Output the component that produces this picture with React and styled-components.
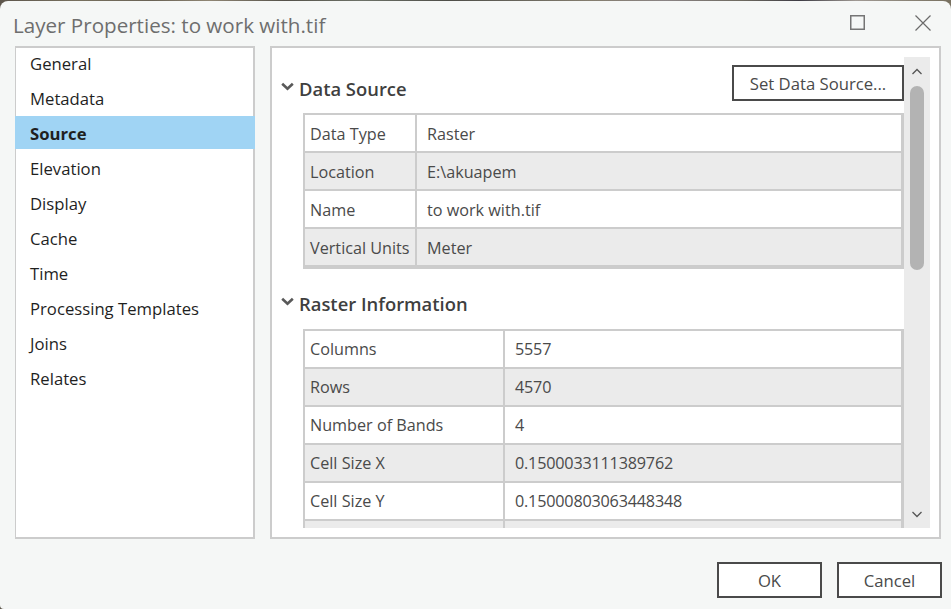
import React from "react";
import styled, { createGlobalStyle } from "styled-components";

const Global = createGlobalStyle`
  html, body { margin: 0; padding: 0; width: 951px; height: 609px; overflow: hidden; }
  body {
    font-family: "Open Sans", "Noto Sans", sans-serif;
    background: linear-gradient(90deg, #5d564c 0%, #77705f 8%, #6a6355 16%, #8f8674 22%, #55524a 30%, #6d7268 38%, #4e4e48 47%, #6d6a60 56%, #847d6e 62%, #8a8484 70%, #6e6a60 78%, #3d3c44 84%, #a09a94 90%, #77705f 100%);
  }
  * { box-sizing: border-box; }
`;

const Dialog = styled.div`
  margin-top: 1px;
  height: 608px;
  background: #f5f7f6;
  border-radius: 8px 8px 0 4px;
  display: flex;
  flex-direction: column;
`;

const TitleBar = styled.div`
  height: 45px;
  flex: none;
  display: flex;
  align-items: center;
  padding: 0 20px 2px 13px;
`;

const Title = styled.div`
  flex: 1;
  font-size: 20.6px;
  color: #6e6e6e;
  line-height: 30px;
  padding-top: 5px;
`;

const WindowControls = styled.div`
  display: flex;
  align-items: center;
  gap: 50px;
`;

const Body = styled.div`
  flex: none;
  height: 493px;
  display: flex;
  gap: 15px;
  padding: 0 10px 0 15px;
`;

const NavList = styled.div`
  width: 240px;
  flex: none;
  background: #fff;
  border: 2px solid #cccccc;
  border-left-width: 1px;
`;

const NavItem = styled.div`
  height: 33px;
  margin: 0 -2px 2px -1px;
  padding: 2px 0 0 15px;
  display: flex;
  align-items: center;
  font-size: 16.7px;
  color: #1f1f1f;
  background: ${(p) => (p.$active ? "#a0d4f4" : "transparent")};
  font-weight: ${(p) => (p.$active ? 700 : 400)};
  &:first-child { margin-top: -2px; }
`;

const Panel = styled.div`
  flex: 1;
  min-width: 0;
  background: #fff;
  border: 2px solid #cccccc;
  padding: 9px 9px 9px 0;
  display: flex;
`;

const Scroller = styled.div`
  flex: 1;
  min-width: 0;
  overflow: hidden;
`;

const TopRow = styled.div`
  display: flex;
  justify-content: space-between;
  align-items: flex-end;
  padding-top: 8px;
  margin-bottom: 12px;
`;

const SectionTitle = styled.div`
  display: flex;
  align-items: center;
  gap: 5px;
  height: 24px;
  padding: 0 0 2px 10px;
  font-size: 18.4px;
  font-weight: 600;
  color: #3f3f3f;
`;

const SectionRow = styled.div`
  margin: 23px 0 13px;
`;

const Button = styled.button`
  height: 36px;
  width: ${(p) => p.$w}px;
  background: #fff;
  border: 2px solid #4a4a4a;
  padding: 1px 0 0;
  font-family: inherit;
  font-size: 16.7px;
  color: #4a4a4a;
`;

const Table = styled.div`
  margin-left: 31px;
  border-top: 2px solid #cccccc;
  border-left: 2px solid #cccccc;
  border-right: 3px solid #cccccc;
  border-bottom: ${(p) => (p.$open ? "0" : "2px solid #cccccc")};
`;

const Row = styled.div`
  height: 38px;
  display: grid;
  grid-template-columns: ${(p) => p.$label}px 1fr;
  border-bottom: 2px solid #cccccc;
  background: ${(p) => (p.$alt ? "#ebebeb" : "#ffffff")};
  font-size: 16.2px;
  color: #4a4a4a;
`;

const LabelCell = styled.div`
  display: flex;
  align-items: center;
  padding: ${(p) => p.$nudge}px 0 0 5px;
  white-space: nowrap;
  border-right: 2px solid #cccccc;
`;

const ValueCell = styled.div`
  display: flex;
  align-items: center;
  padding: ${(p) => p.$nudge}px 0 0 10px;
  letter-spacing: ${(p) => (p.$numeric ? "-0.2px" : "0")};
`;

const Scrollbar = styled.div`
  width: 26px;
  flex: none;
  background: #ebebeb;
  display: flex;
  flex-direction: column;
  align-items: center;
`;

const ArrowBox = styled.div`
  height: 29px;
  flex: none;
  display: flex;
  align-items: center;
  justify-content: center;
`;

const Thumb = styled.div`
  width: 14px;
  height: 184px;
  flex: none;
  border-radius: 7px;
  background: #b3b3b3;
`;

const Track = styled.div`
  flex: 1;
`;

const Footer = styled.div`
  display: flex;
  justify-content: flex-end;
  gap: 15px;
  padding: 23px 9px 0 0;
`;

const ChevronIcon = styled.svg`
  margin: 0 0 4px -1px;
  flex: none;
`;

const Chevron = () => (
  <ChevronIcon width="13" height="9" viewBox="0 0 13 9">
    <path d="M1.2 1.8 L6.5 6.8 L11.8 1.8" fill="none" stroke="#595959" strokeWidth="2.6" />
  </ChevronIcon>
);

const ScrollArrow = ({ up }) => (
  <svg width="12" height="8" viewBox="0 0 12 8">
    <path d={up ? "M1.5 6 L6 1.5 L10.5 6" : "M1.5 2 L6 6.5 L10.5 2"} fill="none" stroke="#555" strokeWidth="1.3" />
  </svg>
);

const nav = ["General", "Metadata", "Source", "Elevation", "Display", "Cache", "Time", "Processing Templates", "Joins", "Relates"];
const dataSource = [["Data Type", "Raster"], ["Location", "E:\\akuapem"], ["Name", "to work with.tif"], ["Vertical Units", "Meter"]];
const raster = [
  ["Columns", "5557"], ["Rows", "4570"], ["Number of Bands", "4"],
  ["Cell Size X", "0.1500033111389762"], ["Cell Size Y", "0.15000803063448348"], ["", ""],
];

const rows = (data, label, nudge) =>
  data.map(([k, v], i) => (
    <Row key={i} $alt={i % 2 === 1} $label={label}>
      <LabelCell $nudge={nudge}>{k}</LabelCell>
      <ValueCell $nudge={nudge} $numeric={/^[\d.]+$/.test(v)}>{v}</ValueCell>
    </Row>
  ));

export default function App() {
  return (
    <>
      <Global />
      <Dialog>
        <TitleBar>
          <Title>Layer Properties: to work with.tif</Title>
          <WindowControls>
            <svg width="15" height="15" viewBox="0 0 15 15">
              <rect x="0.75" y="0.75" width="13.5" height="13.5" fill="none" stroke="#757575" strokeWidth="1.5" />
            </svg>
            <svg width="16" height="16" viewBox="0 0 16 16">
              <path d="M0.5 0.5 L15.5 15.5 M15.5 0.5 L0.5 15.5" fill="none" stroke="#6b6b6b" strokeWidth="1.2" />
            </svg>
          </WindowControls>
        </TitleBar>
        <Body>
          <NavList>
            {nav.map((n) => (
              <NavItem key={n} $active={n === "Source"}>{n}</NavItem>
            ))}
          </NavList>
          <Panel>
            <Scroller>
              <TopRow>
                <SectionTitle><Chevron />Data Source</SectionTitle>
                <Button $w={172}>Set Data Source...</Button>
              </TopRow>
              <Table>{rows(dataSource, 112, 2)}</Table>
              <SectionRow>
                <SectionTitle><Chevron />Raster Information</SectionTitle>
              </SectionRow>
              <Table $open>{rows(raster, 200, 0)}</Table>
            </Scroller>
            <Scrollbar>
              <ArrowBox><ScrollArrow up /></ArrowBox>
              <Thumb />
              <Track />
              <ArrowBox><ScrollArrow /></ArrowBox>
            </Scrollbar>
          </Panel>
        </Body>
        <Footer>
          <Button $w={105}>OK</Button>
          <Button $w={105}>Cancel</Button>
        </Footer>
      </Dialog>
    </>
  );
}
